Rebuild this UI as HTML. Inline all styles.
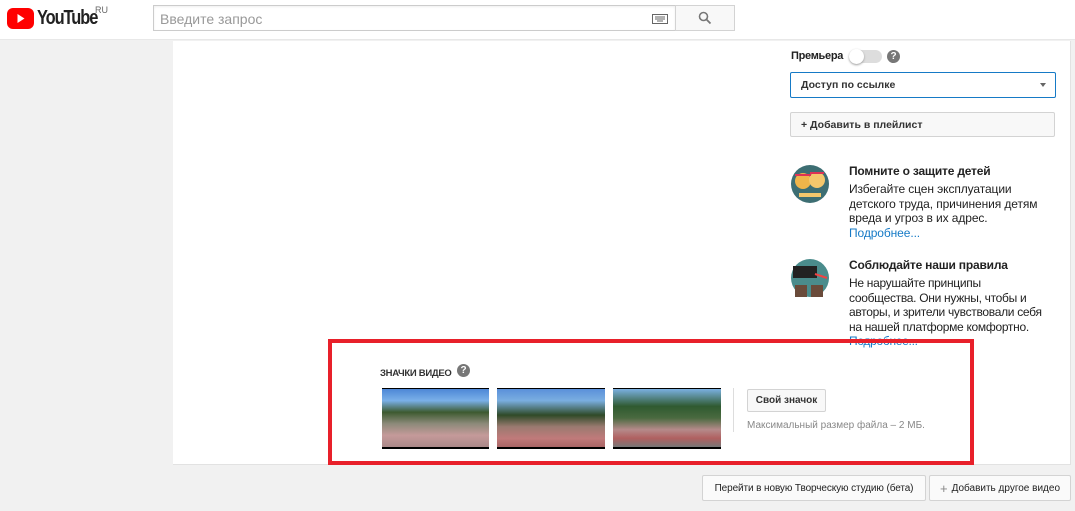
<!DOCTYPE html><html><head><meta charset="utf-8"><style>
*{box-sizing:border-box;margin:0;padding:0}
body{width:1075px;height:511px;background:#f1f1f1;font-family:"Liberation Sans",Arial,sans-serif;position:relative;overflow:hidden;font-size:13px;color:#222}
.a{position:absolute;white-space:nowrap}
.hdr{left:0;top:0;width:1075px;height:40px;background:#fff;border-bottom:1px solid #e8e8e8}
.card{left:173px;top:41px;width:898px;height:424px;background:#fff;border-right:1px solid #e2e2e2;border-bottom:1px solid #e2e2e2}
.btn{background:#f8f8f8;border:1px solid #d3d3d3;border-radius:2px;font-size:10.5px;font-weight:bold;color:#333;display:flex;align-items:center}
.q{width:13px;height:13px;border-radius:50%;background:#777;color:#fff;font-size:10px;font-weight:bold;text-align:center;line-height:13px}
.t{font-size:12px;line-height:14.5px;color:#222;letter-spacing:-0.1px}
.lnk{color:#167ac6}
.th{height:61px;border-bottom:2px solid #000;border-top:1px solid #000}
</style></head><body>
<div class="a hdr"></div>
<svg class="a" style="left:7px;top:8px" width="27" height="21" viewBox="0 0 27 21"><rect width="27" height="21" rx="6" fill="#f00"/><path d="M10.5 6v9l7-4.5z" fill="#fff"/></svg>
<div class="a" style="left:37px;top:7px;font-size:20px;font-weight:bold;letter-spacing:-1.3px;color:#222;transform:scaleX(.82);transform-origin:left">YouTube</div>
<div class="a" style="left:95px;top:5px;font-size:9px;color:#666">RU</div>
<div class="a" style="left:153px;top:5px;width:523px;height:26px;border:1px solid #ccc;background:#fff;box-shadow:inset 0 1px 2px #eee"></div>
<div class="a" style="left:160px;top:11px;font-size:14px;color:#999">Введите запрос</div>
<svg class="a" style="left:652px;top:14px" width="16" height="10"><rect x="0.5" y="0.5" width="15" height="9" fill="none" stroke="#666"/><path d="M3 3h10M3 5h10M5 7h6" stroke="#666"/></svg>
<div class="a" style="left:675px;top:5px;width:60px;height:26px;border:1px solid #d3d3d3;background:#f8f8f8"></div>
<svg class="a" style="left:698px;top:11px" width="14" height="14"><circle cx="5.5" cy="5.5" r="4" fill="none" stroke="#777" stroke-width="1.6"/><path d="M8.5 8.5l4 4" stroke="#777" stroke-width="1.8"/></svg>
<div class="a card"></div>
<div class="a" style="left:791px;top:50px;font-size:11px;font-weight:bold;letter-spacing:-0.3px">Премьера</div>
<div class="a" style="left:849px;top:50px;width:33px;height:13px;border-radius:7px;background:#ddd"></div>
<div class="a" style="left:849px;top:49px;width:15px;height:15px;border-radius:50%;background:#fff;box-shadow:0 1px 2px #999"></div>
<div class="a q" style="left:887px;top:50px">?</div>
<div class="a btn" style="left:790px;top:72px;width:266px;height:26px;border-color:#167ac6;background:#fff;padding-left:10px">Доступ по ссылке</div>
<div class="a" style="left:1040px;top:83px;border:3.5px solid transparent;border-top:4px solid #666"></div>
<div class="a btn" style="left:790px;top:112px;width:265px;height:25px;padding-left:10px">+ Добавить в плейлист</div>
<svg class="a" style="left:791px;top:165px" width="38" height="38"><circle cx="19" cy="19" r="19" fill="#3d6e73"/><circle cx="12" cy="16" r="8" fill="#f0b54a"/><circle cx="26" cy="15" r="8" fill="#f4c76c"/><path d="M4 10h16M19 8h14" stroke="#d35" stroke-width="2"/><path d="M8 30h22" stroke="#f4c76c" stroke-width="4"/></svg>
<div class="a" style="left:849px;top:164px;font-size:12px;font-weight:bold;letter-spacing:-0.2px">Помните о защите детей</div>
<div class="a t" style="left:849px;top:182px">Избегайте сцен эксплуатации<br>детского труда, причинения детям<br>вреда и угроз в их адрес.<br><span class="lnk">Подробнее...</span></div>
<svg class="a" style="left:791px;top:259px" width="38" height="38"><circle cx="19" cy="19" r="19" fill="#4a8c8c"/><rect x="2" y="7" width="24" height="12" fill="#222"/><path d="M24 15l12 4" stroke="#e44" stroke-width="2"/><path d="M4 26h12v12H4zM20 26h12v12H20z" fill="#6a4b3a"/></svg>
<div class="a" style="left:849px;top:258px;font-size:12px;font-weight:bold;letter-spacing:-0.2px">Соблюдайте наши правила</div>
<div class="a t" style="left:849px;top:276px;letter-spacing:-0.3px">Не нарушайте принципы<br>сообщества. Они нужны, чтобы и<br>авторы, и зрители чувствовали себя<br>на нашей платформе комфортно.<br><span class="lnk">Подробнее...</span></div>
<div class="a" style="left:328px;top:339px;width:646px;height:126px;border:4px solid #e8202a"></div>
<div class="a" style="left:380px;top:368px;font-size:9.5px;font-weight:bold;color:#333;letter-spacing:-0.3px">ЗНАЧКИ ВИДЕО</div>
<div class="a q" style="left:457px;top:364px">?</div>
<div class="a th" style="left:382px;top:388px;width:107px;background:linear-gradient(180deg,#4d87d6 0%,#7ab0e8 20%,#3d5a30 40%,#8d8a7a 60%,#c59a9a 80%,#a88)"></div>
<div class="a th" style="left:497px;top:388px;width:108px;background:linear-gradient(180deg,#5a90da 0%,#7aaee0 20%,#2f4a28 45%,#9a7a70 65%,#c07a7a 85%,#a66)"></div>
<div class="a th" style="left:613px;top:388px;width:108px;background:linear-gradient(180deg,#7ab0e0 0%,#2f5a30 30%,#4a6a40 50%,#b58a8a 70%,#b06060 85%,#777)"></div>
<div class="a" style="left:733px;top:388px;width:1px;height:44px;background:#ddd"></div>
<div class="a btn" style="left:747px;top:389px;width:79px;height:23px;justify-content:center;font-size:10px">Свой значок</div>
<div class="a" style="left:747px;top:420px;font-size:10px;color:#888">Максимальный размер файла – 2 МБ.</div>
<div class="a btn" style="left:702px;top:475px;width:224px;height:26px;justify-content:center;font-size:10px;font-weight:normal;color:#222;background:#fafafa;letter-spacing:-0.1px">Перейти в новую Творческую студию (бета)</div>
<div class="a btn" style="left:929px;top:475px;width:142px;height:26px;justify-content:center;font-size:10px;font-weight:normal;color:#222;background:#fafafa"><span style="color:#888;font-size:13px;margin-right:4px">+</span>Добавить другое видео</div>
</body></html>
